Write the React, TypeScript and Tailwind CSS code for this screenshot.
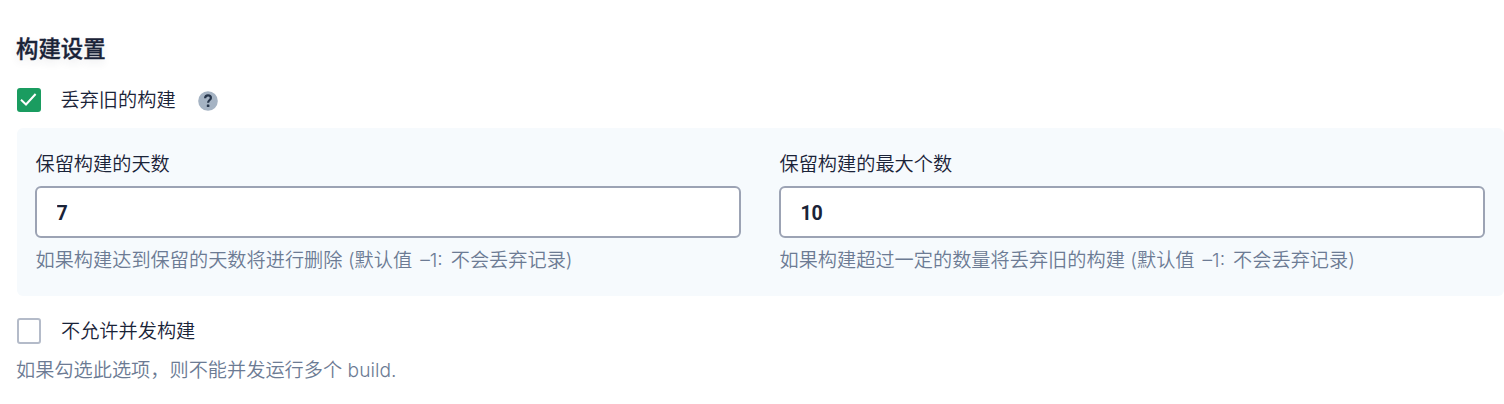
import { useState } from "react";

const labelClass = "text-[19.2px] leading-[28px] font-[350] text-[#1a2338]";
const hintClass = "text-[19.2px] leading-[28px] font-[350] text-[#6c7b94]";

function Checkbox({ checked }: { checked: boolean }) {
  if (!checked) {
    return <span className="h-[26px] w-6 shrink-0 rounded-[3px] border-2 border-[#b4bbc9] bg-white" />;
  }
  return (
    <span className="flex h-6 w-6 shrink-0 items-center justify-center rounded-[3px] bg-[#1a9c60]">
      <svg width="24" height="24" viewBox="0 0 24 24" fill="none">
        <path d="M4 11.8 9 16.5 18.6 6" stroke="white" strokeWidth="2" />
      </svg>
    </span>
  );
}

function HelpIcon() {
  return (
    <svg width="20" height="20" viewBox="0 0 20 20" fill="none">
      <circle cx="10" cy="10" r="9.8" fill="#a5b3c3" />
      <path
        d="M7.1 7.2C7.2 5.2 8.4 4.4 10 4.4c1.7 0 2.9.9 2.9 2.5 0 2.1-2.8 2.2-2.8 4.9"
        stroke="#26354a"
        strokeWidth="2.2"
      />
      <rect x="8.8" y="13.5" width="2.6" height="2.6" rx=".5" fill="#26354a" />
    </svg>
  );
}

function Field({ label, initial, hint, note }: { label: string; initial: string; hint: string; note: string }) {
  const [value, setValue] = useState(initial);
  return (
    <label className="flex min-w-0 flex-1 flex-col">
      <span className={`pl-[0.5px] ${labelClass}`}>{label}</span>
      <input
        className="mt-2 h-[52px] w-full rounded-md border-2 border-[#9ca3b4] bg-white px-[19.5px] pt-[3px] font-['Roboto',sans-serif] text-[19.6px] font-bold tracking-[-0.2px] text-[#1a2338] outline-none"
        value={value}
        onChange={(e) => setValue(e.target.value)}
      />
      <span className={`mt-2 pl-[0.5px] ${hintClass}`}>
        {hint} <span className="[word-spacing:2.6px]">{note}</span>
      </span>
    </label>
  );
}

export default function App() {
  return (
    <main className="flex h-[404px] flex-col overflow-hidden bg-white pl-4 pt-8 font-['Inter','Noto_Sans_CJK_SC',sans-serif]">
      <h2 className="text-[22.4px] leading-[34px] font-medium text-[#1a2338] [-webkit-text-stroke:0.35px_#1a2338] [text-shadow:0_4px_8px_rgba(36,46,66,0.1)]">
        构建设置
      </h2>
      <div className="mt-5 ml-px flex h-7 items-center">
        <Checkbox checked />
        <span className={`ml-[19.5px] ${labelClass}`}>丢弃旧的构建</span>
        <span className="ml-[22.5px] mt-0.5">
          <HelpIcon />
        </span>
      </div>
      <section className="mt-3.5 ml-px flex h-[168px] gap-[38px] rounded-md bg-[#f6fafd] pl-[18px] pr-[19px] pt-[22px]">
        <Field
          label="保留构建的天数"
          initial="7"
          hint="如果构建达到保留的天数将进行删除"
          note="(默认值 –1: 不会丢弃记录)"
        />
        <Field
          label="保留构建的最大个数"
          initial="10"
          hint="如果构建超过一定的数量将丢弃旧的构建"
          note="(默认值 –1: 不会丢弃记录)"
        />
      </section>
      <div className="mt-[21px] ml-px flex h-7 items-center">
        <Checkbox checked={false} />
        <span className={`ml-5 ${labelClass}`}>不允许并发构建</span>
      </div>
      <p className={`mt-[11px] ${hintClass}`}>如果勾选此选项，则不能并发运行多个 build.</p>
    </main>
  );
}
